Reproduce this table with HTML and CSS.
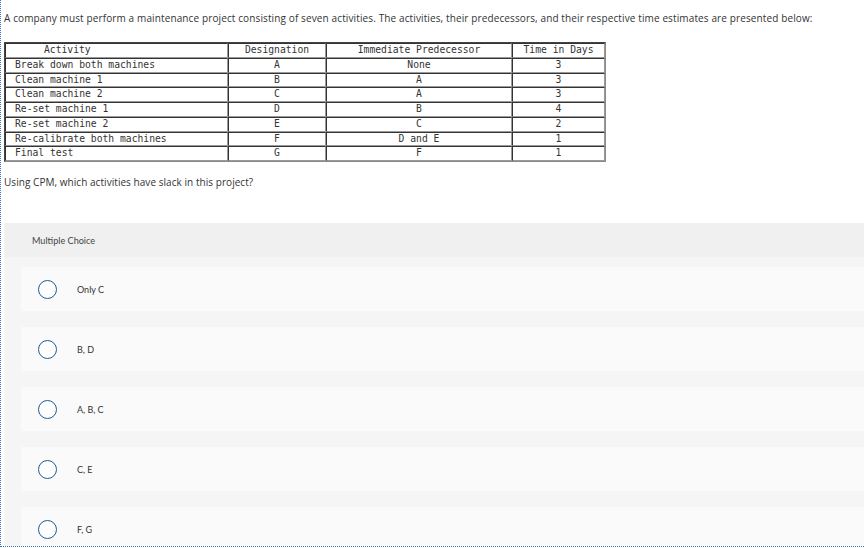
FILE: index.html
```html
<!DOCTYPE html>
<html>
<head>
<meta charset="utf-8">
<link rel="stylesheet" href="styles.css">
</head>
<body>
<div class="frame">
  <p class="intro">A company must perform a maintenance project consisting of seven activities. The activities, their predecessors, and their respective time estimates are presented below:</p>
  <table class="data">
    <colgroup>
      <col class="c1"><col class="c2"><col class="c3"><col class="c4">
    </colgroup>
    <thead>
      <tr><th class="act-head">Activity</th><th>Designation</th><th>Immediate Predecessor</th><th>Time in Days</th></tr>
    </thead>
    <tbody>
      <tr><td class="name">Break down both machines</td><td>A</td><td>None</td><td>3</td></tr>
      <tr><td class="name">Clean machine 1</td><td>B</td><td>A</td><td>3</td></tr>
      <tr><td class="name">Clean machine 2</td><td>C</td><td>A</td><td>3</td></tr>
      <tr><td class="name">Re-set machine 1</td><td>D</td><td>B</td><td>4</td></tr>
      <tr><td class="name">Re-set machine 2</td><td>E</td><td>C</td><td>2</td></tr>
      <tr><td class="name">Re-calibrate both machines</td><td>F</td><td>D and E</td><td>1</td></tr>
      <tr><td class="name">Final test</td><td>G</td><td>F</td><td>1</td></tr>
    </tbody>
  </table>
  <p class="question">Using CPM, which activities have slack in this project?</p>
  <section class="panel">
    <div class="panel-head">Multiple Choice</div>
    <div class="panel-body">
      <div class="option"><span class="radio"></span><span class="label">Only C</span></div>
      <div class="option"><span class="radio"></span><span class="label">B, D</span></div>
      <div class="option"><span class="radio"></span><span class="label">A, B, C</span></div>
      <div class="option"><span class="radio"></span><span class="label">C, E</span></div>
      <div class="option"><span class="radio"></span><span class="label">F, G</span></div>
    </div>
  </section>
</div>
</body>
</html>
```
FILE: styles.css
```css
html, body {
  margin: 0;
  padding: 0;
  background: #ffffff;
}
body {
  font-family: "Open Sans", "Liberation Sans", sans-serif;
  color: #333333;
  overflow: hidden;
}
.frame {
  box-sizing: border-box;
  height: 547px;
  width: 864px;
  border-left: 1px dotted #3b6fc4;
  border-bottom: 1px dotted #3b6fc4;
  padding-left: 3px;
  padding-top: 11px;
  overflow: hidden;
}
.intro {
  margin: 0;
  font-size: 10px;
  letter-spacing: 0.12px;
  line-height: 14px;
  white-space: nowrap;
}
.data {
  margin-top: 17px;
  border-collapse: separate;
  border-spacing: 0;
  width: 600px;
  table-layout: fixed;
  border-top: 1px solid #444;
  border-left: 1px solid #444;
  border-right: 1px solid #8a8a8a;
  border-bottom: 1px solid #8a8a8a;
  font-family: "DejaVu Sans Mono", "Liberation Mono", monospace;
  font-size: 9.7px;
  color: #333;
}
.c1 { width: 223px; }
.c2 { width: 98px; }
.c3 { width: 186px; }
.c4 { width: 93px; }
.data th, .data td {
  padding: 0;
  line-height: 12.75px;
  font-weight: normal;
  text-align: center;
  border-top: 1px solid #333;
  border-left: 1px solid #333;
  border-right: 1px solid #9a9a9a;
  border-bottom: 1px solid #9a9a9a;
  white-space: nowrap;
}
.data th.act-head {
  text-align: left;
  padding-left: 38px;
}
.data td.name {
  text-align: left;
  padding-left: 9px;
}
.question {
  margin: 13px 0 0;
  font-size: 10px;
  letter-spacing: 0.05px;
  line-height: 14px;
}
.panel {
  margin-top: 34px;
  background: #f5f5f5;
  margin-right: -20px;
}
.panel-head {
  background: #f0f0f0;
  height: 34px;
  display: flex;
  align-items: center;
  padding-left: 28px;
  font-family: "Lato", "Liberation Sans", sans-serif;
  font-size: 9.1px;
  color: #444;
}
.panel-body {
  padding: 10px 0 0 17px;
  display: flex;
  flex-direction: column;
  gap: 16px;
}
.option {
  height: 44px;
  background: #fafafa;
  display: flex;
  align-items: center;
  padding-left: 17px;
}
.radio {
  box-sizing: border-box;
  width: 19px;
  height: 19px;
  border: 1.5px solid #1f5a96;
  border-radius: 50%;
  background: #fff;
  flex: none;
}
.label {
  margin-left: 20px;
  font-family: "Lato", "Liberation Sans", sans-serif;
  font-size: 9px;
  color: #333;
}
```
